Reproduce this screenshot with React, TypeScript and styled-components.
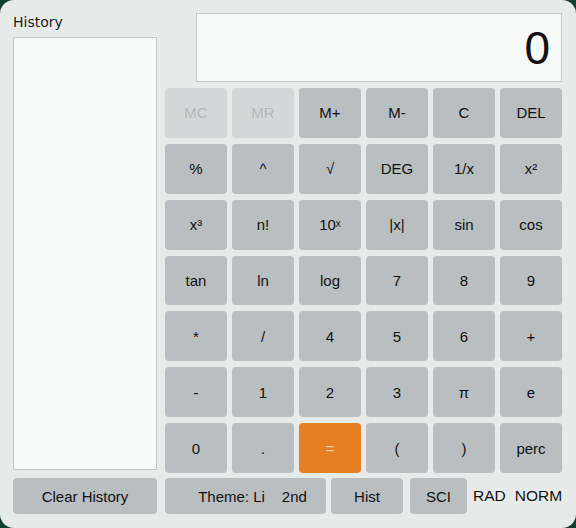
import React from 'react';
import styled, { createGlobalStyle } from 'styled-components';

const GlobalStyle = createGlobalStyle`
  html, body {
    margin: 0;
    padding: 0;
    background: #123f30;
  }
  #root {
    width: 576px;
    height: 528px;
  }
`;

const Window = styled.div`
  box-sizing: border-box;
  width: 576px;
  height: 528px;
  border-radius: 14px;
  background: #e6ebea;
  padding: 13px 14px 0 13px;
  display: grid;
  grid-template-columns: 144px 1fr;
  grid-template-rows: 457px 36px;
  column-gap: 8px;
  row-gap: 8px;
  font-family: 'Liberation Sans', Arial, sans-serif;
`;

const HistoryColumn = styled.div`
  display: flex;
  flex-direction: column;
  gap: 6px;
`;

const HistoryLabel = styled.div`
  font-family: 'DejaVu Sans', sans-serif;
  font-size: 14px;
  line-height: 18px;
  color: #1a1a1a;
`;

const HistoryList = styled.div`
  flex: 1;
  background: #f8f9f9;
  border: 1px solid #c3c8c8;
`;

const MainColumn = styled.div`
  display: flex;
  flex-direction: column;
  align-items: flex-end;
  gap: 6px;
`;

const Display = styled.div`
  box-sizing: border-box;
  flex: none;
  width: 366px;
  height: 69px;
  background: #f8f9f9;
  border: 1px solid #c3c8c8;
  display: flex;
  align-items: center;
  justify-content: flex-end;
  padding-right: 11px;
  font-size: 46px;
  color: #111;
`;

const Keypad = styled.div`
  flex: none;
  width: 100%;
  height: 385px;
  display: grid;
  grid-template-columns: repeat(6, 62px);
  grid-template-rows: repeat(7, 1fr);
  column-gap: 5px;
  row-gap: 6px;
`;

type Variant = 'normal' | 'disabled' | 'accent';

const Key = styled.button<{ $variant?: Variant }>`
  border: none;
  border-radius: 4px;
  font-family: 'Liberation Sans', Arial, sans-serif;
  font-size: 15px;
  padding: 0;
  background: ${(p) =>
    p.$variant === 'disabled' ? '#d2d8d8' : p.$variant === 'accent' ? '#e67e22' : '#b9bfc1'};
  color: ${(p) =>
    p.$variant === 'disabled' ? '#b2b8b9' : p.$variant === 'accent' ? '#f6cfa8' : '#111'};
`;

const BottomLeft = styled.div`
  display: flex;
`;

const BottomBar = styled.div`
  display: flex;
  align-items: stretch;
`;

const BarButton = styled(Key)<{ $w: number; $mr: number }>`
  width: ${(p) => p.$w}px;
  margin-right: ${(p) => p.$mr}px;
  flex: none;
`;

const WideButton = styled(Key)`
  flex: 1;
`;

const ThemeButton = styled(Key)`
  width: 161px;
  margin-right: 5px;
  display: flex;
  align-items: center;
  justify-content: center;
  padding-left: 14px;
  gap: 17px;
  white-space: nowrap;
`;

const Mode = styled.span<{ $mr: number }>`
  display: flex;
  align-items: center;
  font-size: 15.5px;
  color: #111;
  margin-right: ${(p) => p.$mr}px;
`;

const keys: [string, Variant?][] = [
  ['MC', 'disabled'], ['MR', 'disabled'], ['M+'], ['M-'], ['C'], ['DEL'],
  ['%'], ['^'], ['√'], ['DEG'], ['1/x'], ['x²'],
  ['x³'], ['n!'], ['10ˣ'], ['|x|'], ['sin'], ['cos'],
  ['tan'], ['ln'], ['log'], ['7'], ['8'], ['9'],
  ['*'], ['/'], ['4'], ['5'], ['6'], ['+'],
  ['-'], ['1'], ['2'], ['3'], ['π'], ['e'],
  ['0'], ['.'], ['=', 'accent'], ['('], [')'], ['perc'],
];

const App: React.FC = () => (
  <>
    <GlobalStyle />
    <Window>
      <HistoryColumn>
        <HistoryLabel>History</HistoryLabel>
        <HistoryList />
      </HistoryColumn>
      <MainColumn>
        <Display>0</Display>
        <Keypad>
          {keys.map(([label, variant], i) => (
            <Key key={i} $variant={variant}>
              {label}
            </Key>
          ))}
        </Keypad>
      </MainColumn>
      <BottomLeft>
        <WideButton>Clear History</WideButton>
      </BottomLeft>
      <BottomBar>
        <ThemeButton>
          <span>Theme: Li</span>
          <span>2nd</span>
        </ThemeButton>
        <BarButton $w={72} $mr={7}>Hist</BarButton>
        <BarButton $w={57} $mr={6}>SCI</BarButton>
        <Mode $mr={9}>RAD</Mode>
        <Mode $mr={0}>NORM</Mode>
      </BottomBar>
    </Window>
  </>
);

export default App;
